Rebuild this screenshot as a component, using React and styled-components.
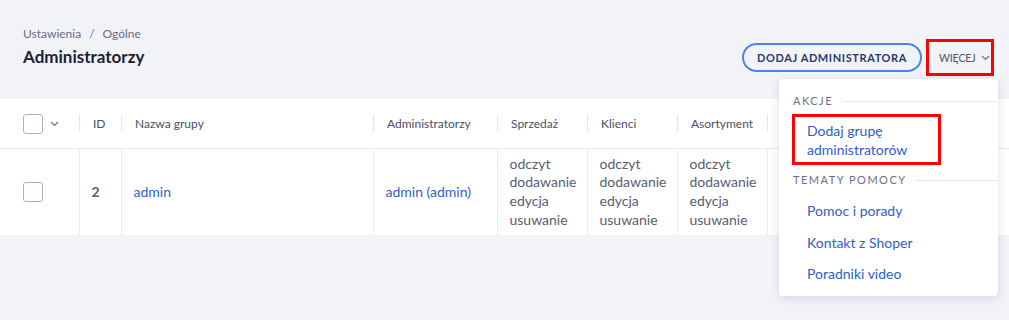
import React from 'react';
import styled, { createGlobalStyle } from 'styled-components';

const GlobalStyle = createGlobalStyle`
  html, body {
    margin: 0;
    padding: 0;
    background: #f2f3f7;
    font-family: "Lato", "Liberation Sans", sans-serif;
  }
`

const Page = styled.div`
  position: relative;
  width: 1009px;
  height: 320px;
  overflow: hidden;
`

const Header = styled.div`
  display: flex;
  justify-content: space-between;
  align-items: flex-start;
  height: 99px;
  padding: 0 15px 0 23px;
  box-sizing: border-box;
`

const TitleBlock = styled.div`
  padding-top: 26px;
`

const Breadcrumb = styled.div`
  font-size: 12px;
  line-height: 16px;
  color: #6a6a86;
  span { margin: 0 8px; }
`

const Title = styled.h1`
  margin: 4px 0 0;
  font-size: 17px;
  line-height: 22px;
  font-weight: 700;
  color: #1d2133;
`

const Actions = styled.div`
  display: flex;
  align-items: center;
  gap: 4px;
  margin-top: 39px;
`

const OutlineButton = styled.button`
  height: 29px;
  width: 180px;
  border: 2px solid #4a85e6;
  border-radius: 15px;
  background: transparent;
  color: #263a6e;
  font-family: inherit;
  font-size: 11px;
  font-weight: 700;
  letter-spacing: 0.6px;
  padding: 0;
`

const MoreButton = styled.button`
  display: flex;
  align-items: center;
  gap: 5px;
  height: 37px;
  width: 68px;
  box-sizing: border-box;
  border: 3px solid #ff0000;
  background: transparent;
  padding: 0 0 0 10px;
  font-family: inherit;
  font-size: 10.5px;
  font-weight: 400;
  letter-spacing: -0.1px;
  color: #50546a;
  white-space: nowrap;
  svg { flex-shrink: 0; }
`

const Table = styled.table`
  width: 100%;
  border-collapse: collapse;
  background: #fff;
  table-layout: fixed;
`

const Th = styled.th`
  position: relative;
  height: 49px;
  padding: 0 0 0 ${p => (p.$first ? 0 : 14)}px;
  text-align: left;
  font-size: 12px;
  font-weight: 400;
  color: #4b4f63;
  border-bottom: 1px solid #e9eaee;
  &::before {
    content: ${p => (p.$first ? 'none' : '""')};
    position: absolute;
    left: 0;
    top: 16px;
    height: 17px;
    width: 1px;
    background: #e6e7eb;
  }
`

const Td = styled.td`
  height: 86px;
  padding: 0 0 0 ${p => (p.$first ? 0 : 12)}px;
  vertical-align: middle;
  font-size: 14px;
  line-height: 18.7px;
  color: #5a5d6e;
  border-left: ${p => (p.$first ? 'none' : '1px solid #ececef')};
  font-weight: ${p => (p.$bold ? 700 : 400)};
`

const Link = styled.a`
  color: #2f5fc4;
  text-decoration: none;
`

const CheckCell = styled.div`
  display: flex;
  align-items: center;
  gap: 7px;
  padding-left: 23px;
`

const Checkbox = styled.span`
  display: inline-block;
  width: 20px;
  height: 20px;
  box-sizing: border-box;
  border: 1px solid #a9b1cb;
  border-radius: 3px;
  background: #fff;
`

const Dropdown = styled.div`
  position: absolute;
  top: 79px;
  right: 11px;
  width: 219px;
  height: 217px;
  box-sizing: border-box;
  background: #fff;
  border-radius: 4px;
  box-shadow: 0 2px 10px rgba(40, 45, 70, 0.14);
  padding: 14px 0 6px 14px;
`

const SectionLabel = styled.div`
  display: flex;
  align-items: center;
  font-size: 11px;
  line-height: 16px;
  letter-spacing: 1.5px;
  color: #6c6f82;
  margin-top: ${p => p.$mt || 0}px;
  &::after {
    content: "";
    flex: 1;
    height: 1px;
    margin-left: 9px;
    background: #e6e7eb;
  }
`

const ItemList = styled.div`
  margin-top: 7px;
`

const Item = styled.a`
  display: block;
  width: ${p => (p.$boxed ? '149px' : 'fit-content')};
  box-sizing: border-box;
  margin: ${p => (p.$boxed ? '5px 0 0 -1px' : '0')};
  padding: ${p => (p.$boxed ? '3.5px 12px 3.5px 12px' : '6px 0 6px 14px')};
  border: ${p => (p.$boxed ? '3px solid #ff0000' : 'none')};
  font-size: 14px;
  line-height: ${p => (p.$boxed ? '19px' : '19.5px')};
  color: #2f5fc4;
  text-decoration: none;
`

const Chevron = () => (
  <svg width="9" height="6" viewBox="0 0 9 6" fill="none">
    <path d="M1 1l3.5 3.5L8 1" stroke="#6b7086" strokeWidth="1.2" />
  </svg>
)

const perms = ['odczyt', 'dodawanie', 'edycja', 'usuwanie']

const PermList = () => (
  <>
    {perms.map(p => (
      <div key={p}>{p}</div>
    ))}
  </>
)

// the last two columns sit under the open dropdown, so they are left empty
const columns = [
  { w: 79 },
  { w: 42, label: 'ID' },
  { w: 252, label: 'Nazwa grupy' },
  { w: 124, label: 'Administratorzy' },
  { w: 90, label: 'Sprzedaż', perms: true },
  { w: 90, label: 'Klienci', perms: true },
  { w: 90, label: 'Asortyment', perms: true },
  { w: 90, label: '' },
  { label: '' },
]

export default function App() {
  return (
    <Page>
      <GlobalStyle />
      <Header>
        <TitleBlock>
          <Breadcrumb>
            Ustawienia<span>/</span>Ogólne
          </Breadcrumb>
          <Title>Administratorzy</Title>
        </TitleBlock>
        <Actions>
          <OutlineButton>DODAJ ADMINISTRATORA</OutlineButton>
          <MoreButton>
            WIĘCEJ <Chevron />
          </MoreButton>
        </Actions>
      </Header>

      <Table>
        <colgroup>
          {columns.map((c, i) => (
            <col key={i} style={c.w ? { width: c.w } : undefined} />
          ))}
        </colgroup>
        <thead>
          <tr>
            <Th $first>
              <CheckCell>
                <Checkbox />
                <Chevron />
              </CheckCell>
            </Th>
            {columns.slice(1).map((c, i) => (
              <Th key={i}>{c.label}</Th>
            ))}
          </tr>
        </thead>
        <tbody>
          <tr>
            <Td $first>
              <CheckCell>
                <Checkbox />
              </CheckCell>
            </Td>
            <Td $bold>2</Td>
            <Td>
              <Link href="#">admin</Link>
            </Td>
            <Td>
              <Link href="#">admin (admin)</Link>
            </Td>
            {columns.slice(4).map((c, i) => (
              <Td key={i}>{c.perms && <PermList />}</Td>
            ))}
          </tr>
        </tbody>
      </Table>

      <Dropdown>
        <SectionLabel>AKCJE</SectionLabel>
        <Item href="#" $boxed>Dodaj grupę administratorów</Item>
        <SectionLabel $mt={7}>TEMATY POMOCY</SectionLabel>
        <ItemList>
          <Item href="#">Pomoc i porady</Item>
          <Item href="#">Kontakt z Shoper</Item>
          <Item href="#">Poradniki video</Item>
        </ItemList>
      </Dropdown>
    </Page>
  )
}
